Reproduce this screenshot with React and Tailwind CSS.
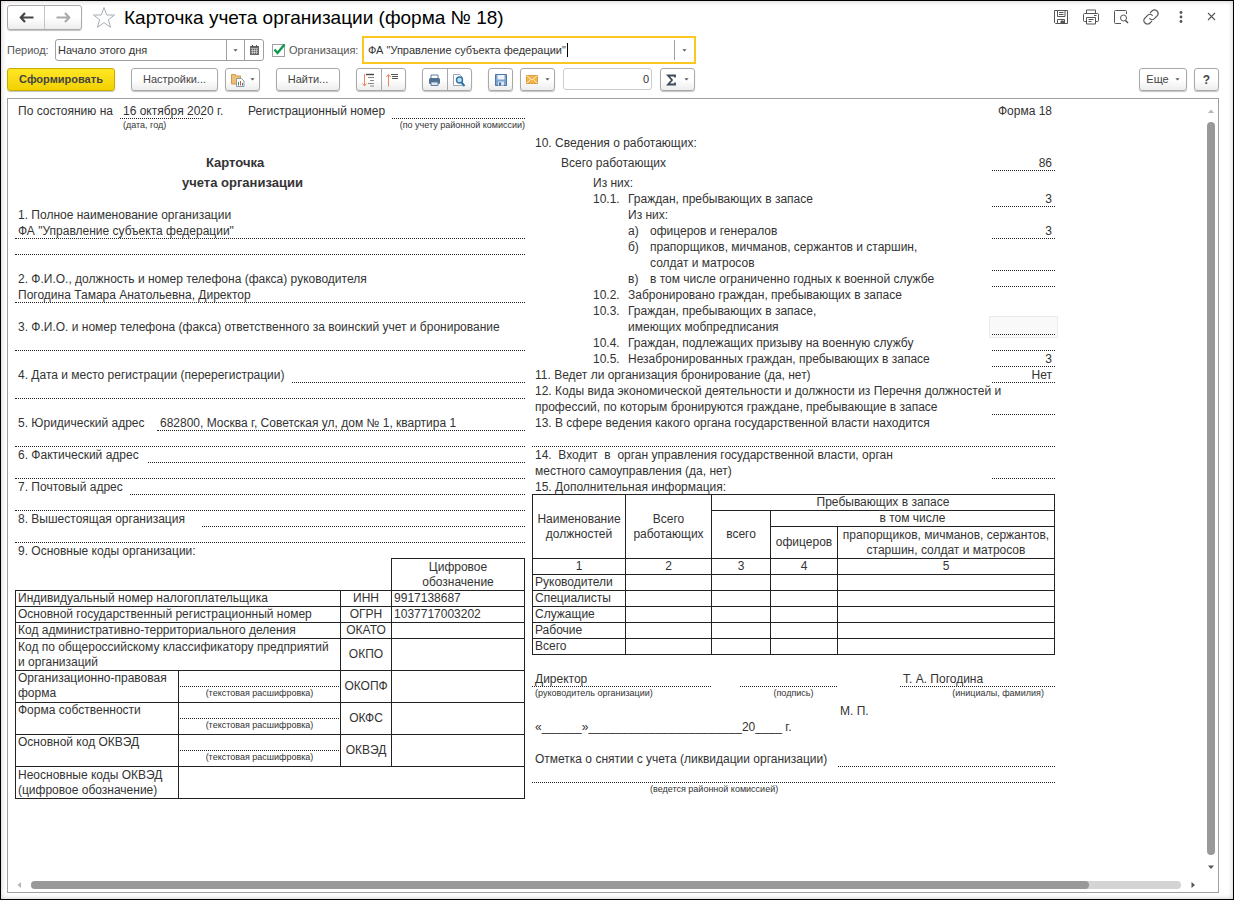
import React, { useState } from 'react';

const toolButton =
  'flex h-[23px] items-center justify-center rounded-[3px] border border-[#a9a9a9] bg-linear-to-b from-white from-50% to-[#ededed] shadow-[0_1px_1px_#c4c4c4]';

function Caret({ className = '' }) {
  return (
    <svg className={className} width="5" height="3" viewBox="0 0 5 3" aria-hidden="true">
      <path d="M.4.2h4.200L2.500 2.600z" fill="#555" />
    </svg>
  );
}

function BackIcon({ color }) {
  return (
    <svg width="15" height="11" viewBox="0 0 15 11" fill="none" stroke={color} strokeWidth="2.2">
      <path d="M1.5 5.5H14.5M6 1L1.8 5.5L6 10" />
    </svg>
  );
}

function StarIcon() {
  return (
    <svg width="24" height="23" viewBox="0 0 24 23" fill="#fff" stroke="#a8aeb4" strokeWidth="1">
      <path d="M12 1.5L14.7 9H22.5L16.3 13.7L18.6 21.3L12 16.7L5.4 21.3L7.7 13.7L1.5 9H9.3Z" />
    </svg>
  );
}

function CalendarIcon() {
  return (
    <svg width="9" height="10" viewBox="0 0 9 10">
      <path d="M0 1h9v9H0z" fill="#666" />
      <path d="M2 0h1v2H2zM6 0h1v2H6z" fill="#555" />
      <path d="M1 3.5h7M1 5.5h7M1 7.5h7M2.5 4v5M4.5 4v5M6.5 4v5" stroke="#ddd" strokeWidth=".6" />
    </svg>
  );
}

function SaveIcon() {
  return (
    <svg width="16" height="16" viewBox="0 0 16 16" fill="none" stroke="#555" strokeWidth="1">
      <path d="M1.5 1.5h13v13h-12l-1-1z" />
      <path d="M4.500 1.5v6h7.500v-6M6 3.500h4.500M6 5.500h4.500M4.500 14.5v-4h7v4" />
      <path d="M8 12h2.500v2H8z" fill="#555" />
    </svg>
  );
}

function PrinterIcon() {
  return (
    <svg width="16" height="16" viewBox="0 0 16 16" fill="none" stroke="#555" strokeWidth="1">
      <path d="M3.500 4.500v-3.500h9v3.500M3.500 12.500h-2a1 1 0 0 1-1-1v-6a1 1 0 0 1 1-1h13a1 1 0 0 1 1 1v6a1 1 0 0 1-1 1h-2" />
      <path d="M3.500 8.500h9v6.500h-9zM5.500 10.500h5M5.500 12.500h3M11 6.500h2.500" />
    </svg>
  );
}

function PreviewIcon() {
  return (
    <svg width="16" height="16" viewBox="0 0 16 16" fill="none" stroke="#555" strokeWidth="1">
      <path d="M8 14.500H2.500a1 1 0 0 1-1-1v-11a1 1 0 0 1 1-1h10a1 1 0 0 1 1 1V5" />
      <circle cx="10.500" cy="9" r="3" />
      <path d="M12.500 11.500L15 14" strokeWidth="1.600" />
    </svg>
  );
}

function LinkIcon() {
  return (
    <svg width="16" height="16" viewBox="0 0 24 24" fill="none" stroke="#555" strokeWidth="1.600" strokeLinecap="round">
      <path d="M10 14.500a5 5 0 0 0 7 0l4-4a5 5 0 0 0-7.500-7.500l-2.500 2.500" />
      <path d="M14 9.500a5 5 0 0 0-7 0l-4 4a5 5 0 0 0 7.500 7.500l2.500-2.500" />
    </svg>
  );
}

function DotsIcon() {
  return (
    <svg width="4" height="12" viewBox="0 0 4 12" fill="#555">
      <circle cx="2" cy="1.500" r="1.400" />
      <circle cx="2" cy="6" r="1.400" />
      <circle cx="2" cy="10.500" r="1.400" />
    </svg>
  );
}

function CloseIcon() {
  return (
    <svg width="9" height="9" viewBox="0 0 9 9" stroke="#555" strokeWidth="1.100">
      <path d="M1 1l7 7M8 1L1 8" />
    </svg>
  );
}

function VariantIcon() {
  return (
    <svg width="14" height="14" viewBox="0 0 14 14">
      <path d="M.5 1.500h4l1 1.500h4v8h-9z" fill="#edc078" stroke="#d09c48" />
      <path d="M5.500 5.500h5l2.500 2.500v5.500H5.500z" fill="#fff" stroke="#8b9aa8" />
      <path d="M7.500 9v3.500" stroke="#3c8f5a" />
      <path d="M9.500 8v4.500" stroke="#d8573c" />
      <path d="M11.500 10v2.500" stroke="#3c74b0" />
    </svg>
  );
}

function ExpandIcon() {
  return (
    <svg width="14" height="14" viewBox="0 0 14 14" fill="none">
      <path d="M2.500 1v12M.5 10.500l2 2.500l2-2.500" stroke="#ee8458" />
      <path d="M4 1.500h8" stroke="#444" strokeWidth="1.400" />
      <path d="M6 4.500h6M8 7.500h4M6 10.500h6M8 13h4" stroke="#888" strokeWidth="1.200" />
    </svg>
  );
}

function CollapseIcon() {
  return (
    <svg width="14" height="14" viewBox="0 0 14 14" fill="none">
      <path d="M2.500 13.500V1.500M.5 4l2-2.500l2 2.500" stroke="#ee8458" />
      <path d="M5 1.500h7M6 3.500h6M6 5.500h6" stroke="#555" strokeWidth="1.200" />
    </svg>
  );
}

function PrintBlueIcon() {
  return (
    <svg width="13" height="12" viewBox="0 0 13 12">
      <path d="M3 1h7v4H3z" fill="#fff" stroke="#5f7f9e" />
      <rect x="1" y="4" width="11" height="6" rx="1.500" fill="#4d6f90" />
      <path d="M3 8h7v3.500H3z" fill="#dfe9f2" stroke="#5f7f9e" />
    </svg>
  );
}

function PreviewBlueIcon() {
  return (
    <svg width="14" height="14" viewBox="0 0 14 14" fill="none">
      <path d="M1.500 1.500h6l3 3v8h-9z" fill="#fff" stroke="#9aa5b0" />
      <circle cx="7.500" cy="7" r="3" fill="#bfe0f2" stroke="#2f75a5" strokeWidth="1.400" />
      <path d="M9.500 9.500l3 3.500" stroke="#2f75a5" strokeWidth="2" />
    </svg>
  );
}

function SaveBlueIcon() {
  return (
    <svg width="12" height="12" viewBox="0 0 12 12">
      <path d="M.5.5h11v11h-11z" fill="#7ba4cf" stroke="#4c78a6" />
      <path d="M2.500 1h7v4.500h-7z" fill="#eef4fa" />
      <path d="M3 7.500h6v4H3z" fill="#dde6ee" />
      <path d="M4 8.500h2v3H4z" fill="#3e6c9c" />
    </svg>
  );
}

function MailIcon() {
  return (
    <svg width="12" height="9" viewBox="0 0 12 9">
      <path d="M.5.5h11v8H.5z" fill="#f1b44c" stroke="#dfa043" />
      <path d="M1 1l5 4l5-4M1 8l3.500-3.500M11 8L7.500 4.500" fill="none" stroke="#fff0cc" strokeWidth=".9" />
    </svg>
  );
}

function ScrollArrow({ d, color = '#555' }) {
  return (
    <svg width="6" height="6" viewBox="0 0 6 6" aria-hidden="true">
      <path d={d} fill={color} />
    </svg>
  );
}

function TitleBar() {
  return (
    <header className="flex h-[33px] items-center pl-[6px] pr-[14px]">
      <div className="flex h-[25px] rounded-[3px] border border-[#a9a9a9] bg-linear-to-b from-white from-50% to-[#ededed] shadow-[0_1px_1px_#c4c4c4]">
        <button aria-label="Назад" className="flex w-[37px] items-center justify-center border-r border-[#c4c4c4]">
          <BackIcon color="#444" />
        </button>
        <button aria-label="Вперед" className="flex w-[36px] items-center justify-center">
          <span className="-scale-x-100"><BackIcon color="#aaa" /></span>
        </button>
      </div>
      <button aria-label="В избранное" className="ml-[10px]"><StarIcon /></button>
      <h1 className="ml-[8px] whitespace-nowrap text-[19px] leading-[24px] text-black">
        Карточка учета организации (форма № 18)
      </h1>
      <div className="ml-auto flex items-center gap-[14px] pb-[2px]">
        <button aria-label="Сохранить"><SaveIcon /></button>
        <button aria-label="Печать"><PrinterIcon /></button>
        <button aria-label="Просмотр"><PreviewIcon /></button>
        <button aria-label="Ссылка"><LinkIcon /></button>
        <button aria-label="Меню" className="flex w-4 justify-center"><DotsIcon /></button>
        <button aria-label="Закрыть" className="flex w-4 justify-center"><CloseIcon /></button>
      </div>
    </header>
  );
}

function Filters() {
  const [period, setPeriod] = useState('Начало этого дня');
  const [org, setOrg] = useState('ФА "Управление субъекта федерации"');
  const [byOrg, setByOrg] = useState(true);

  return (
    <div className="flex h-[32px] items-center pl-[6px]">
      <label htmlFor="period" className="w-[48px] text-[#555]">Период:</label>
      <div className="flex h-[22px] w-[209px] rounded-[3px] border border-[#a0a0a0] bg-white">
        <input
          id="period"
          value={period}
          onChange={(e) => setPeriod(e.target.value)}
          className="min-w-0 flex-1 pl-[2px] text-[#333] outline-none"
        />
        <button aria-label="Выбрать период" className="flex w-[18px] items-center justify-center border-l border-[#a0a0a0]">
          <Caret />
        </button>
        <button aria-label="Календарь" className="flex w-[19px] items-center justify-center border-l border-[#a0a0a0]">
          <CalendarIcon />
        </button>
      </div>
      <div className="relative ml-[8px] h-[13px] w-[13px]">
        <input
          id="byOrg"
          type="checkbox"
          checked={byOrg}
          onChange={(e) => setByOrg(e.target.checked)}
          className="block h-[13px] w-[13px] appearance-none border border-[#a0a0a0] bg-white"
        />
        {byOrg && (
          <svg className="pointer-events-none absolute -top-px left-px" width="13" height="13" viewBox="0 0 13 13" fill="none">
            <path d="M1.500 6.500L4.500 10L11.500 1.500" stroke="#0a9a4a" strokeWidth="2.400" />
          </svg>
        )}
      </div>
      <label htmlFor="byOrg" className="ml-[4px] w-[73px] text-[#555]">Организация:</label>
      <div className="relative flex h-[28px] w-[334px] border-2 border-[#fcc71f] bg-white">
        <input
          aria-label="Организация"
          value={org}
          onChange={(e) => setOrg(e.target.value)}
          className="min-w-0 flex-1 pl-[4px] text-[#333] outline-none"
        />
        <span className="pointer-events-none absolute left-[203px] top-[5px] h-[14px] w-px bg-black" />
        <button aria-label="Выбрать организацию" className="my-[2px] flex w-[20px] items-center justify-center border-l border-[#a0a0a0]">
          <Caret />
        </button>
      </div>
    </div>
  );
}

function Toolbar() {
  return (
    <div className="flex h-[32px] items-start pl-[6px] pr-[14px] pt-[2px] text-[#444]">
      <button className="h-[23px] w-[108px] rounded-[3px] border border-[#c9ab00] bg-linear-to-b from-[#ffe722] to-[#f2d100] font-bold shadow-[0_1px_1px_#c4c4c4]">
        Сформировать
      </button>
      <button className={`${toolButton} ml-[16px] w-[87px]`}>Настройки...</button>
      <button aria-label="Варианты" className={`${toolButton} ml-[7px] w-[35px] gap-[5px]`}>
        <VariantIcon />
        <Caret />
      </button>
      <button className={`${toolButton} ml-[16px] w-[64px]`}>Найти...</button>
      <div className={`${toolButton} ml-[16px] w-[50px]`}>
        <button aria-label="Развернуть группы" className="flex h-full flex-1 items-center justify-center border-r border-[#a9a9a9]">
          <ExpandIcon />
        </button>
        <button aria-label="Свернуть группы" className="flex h-full flex-1 items-center justify-center">
          <CollapseIcon />
        </button>
      </div>
      <div className={`${toolButton} ml-[16px] w-[50px]`}>
        <button aria-label="Печать" className="flex h-full flex-1 items-center justify-center border-r border-[#a9a9a9]">
          <PrintBlueIcon />
        </button>
        <button aria-label="Просмотр" className="flex h-full flex-1 items-center justify-center">
          <PreviewBlueIcon />
        </button>
      </div>
      <button aria-label="Сохранить" className={`${toolButton} ml-[16px] w-[25px]`}><SaveBlueIcon /></button>
      <button aria-label="Отправить" className={`${toolButton} ml-[7px] w-[35px] gap-[7px]`}>
        <MailIcon />
        <Caret />
      </button>
      <input
        aria-label="Сумма"
        readOnly
        value="0"
        className="ml-[8px] h-[22px] w-[89px] rounded-[3px] border border-[#ccc] bg-white pr-[2px] text-right text-[#333]"
      />
      <button aria-label="Сумма ячеек" className={`${toolButton} ml-[8px] w-[35px] gap-[7px]`}>
        <svg width="11" height="12" viewBox="0 0 11 12" fill="none" stroke="#3c4a58" strokeWidth="1.800">
          <path d="M9 3.500V1.500H2L6 6L2 10.500H9V8.500" />
        </svg>
        <Caret />
      </button>
      <button className={`${toolButton} ml-auto w-[48px] gap-[6px]`}>
        Еще
        <Caret />
      </button>
      <button aria-label="Справка" className={`${toolButton} ml-[7px] w-[25px] text-[12px] font-bold`}>?</button>
    </div>
  );
}

// one 16px sheet row, the dotted rule fills what the label leaves free
function Field({ label, width = '', value = '' }) {
  return (
    <div className="flex h-4">
      {label && <span className={`${width} shrink-0 pl-[3px]`}>{label}</span>}
      <span className="flex-1 border-b border-dotted border-[#222] pl-[3px]">{value}</span>
    </div>
  );
}

function Line({ children, indent = 'pl-[3px]' }) {
  return <div className={`h-4 ${indent}`}>{children}</div>;
}

// row of the right column with a value cell at its end
function Stat({ indent = 'pl-[96px]', num, numWidth = 'w-[35px]', text, value = '', tall, line = true, active }) {
  return (
    <div className={`flex items-end ${tall ? 'h-5' : 'h-4'}`}>
      <div className={`flex min-w-0 flex-1 ${indent}`}>
        {num !== undefined && <span className={`${numWidth} shrink-0`}>{num}</span>}
        <span>{text}</span>
      </div>
      {line && (
        <div
          className={`h-4 w-[63px] border-b border-dotted border-[#222] pr-[3px] text-right ${
            active ? 'bg-[#f9f9f9] shadow-[0_0_0_2px_#f9f9f9,0_0_0_3px_#ebebeb]' : ''
          }`}
        >
          {value}
        </div>
      )}
    </div>
  );
}

const cell = 'border border-[#222] p-0';

function TextCode({ name, code }) {
  return (
    <tr className="h-8">
      <td className={`${cell} pl-[2px] align-top`}>{name}</td>
      <td className={`${cell} align-top`}>
        <div className="mx-px h-4 border-b border-dotted border-[#222]" />
        <div className="text-center text-[9px] leading-[13px]">(текстовая расшифровка)</div>
      </td>
      <td className={`${cell} text-center`}>{code}</td>
      <td className={cell} />
    </tr>
  );
}

function CodesTable() {
  return (
    <table className="-mt-px w-full table-fixed border-collapse leading-[15px]">
      <colgroup>
        <col className="w-[163px]" />
        <col className="w-[162px]" />
        <col className="w-[51px]" />
        <col />
      </colgroup>
      <tbody>
        <tr className="h-8">
          <td colSpan={3} />
          <th className={`${cell} font-normal`}>Цифровое<br />обозначение</th>
        </tr>
        <tr className="h-4">
          <td colSpan={2} className={`${cell} pl-[2px]`}>Индивидуальный номер налогоплательщика</td>
          <td className={`${cell} text-center`}>ИНН</td>
          <td className={`${cell} pl-[2px]`}>9917138687</td>
        </tr>
        <tr className="h-4">
          <td colSpan={2} className={`${cell} pl-[2px]`}>Основной государственный регистрационный номер</td>
          <td className={`${cell} text-center`}>ОГРН</td>
          <td className={`${cell} pl-[2px]`}>1037717003202</td>
        </tr>
        <tr className="h-4">
          <td colSpan={2} className={`${cell} pl-[2px]`}>Код административно-территориального деления</td>
          <td className={`${cell} text-center`}>ОКАТО</td>
          <td className={cell} />
        </tr>
        <tr className="h-8">
          <td colSpan={2} className={`${cell} pl-[2px]`}>
            Код по общероссийскому классификатору предприятий<br />и организаций
          </td>
          <td className={`${cell} text-center`}>ОКПО</td>
          <td className={cell} />
        </tr>
        <TextCode name={<>Организационно-правовая<br />форма</>} code="ОКОПФ" />
        <TextCode name="Форма собственности" code="ОКФС" />
        <TextCode name="Основной код ОКВЭД" code="ОКВЭД" />
        <tr className="h-8">
          <td className={`${cell} pl-[2px]`}>Неосновные коды ОКВЭД<br />(цифровое обозначение)</td>
          <td colSpan={3} className={cell} />
        </tr>
      </tbody>
    </table>
  );
}

function StaffTable() {
  const rows = ['Руководители', 'Специалисты', 'Служащие', 'Рабочие', 'Всего'];
  return (
    <table className="-mt-px w-full table-fixed border-collapse leading-[15px]">
      <colgroup>
        <col className="w-[93px]" />
        <col className="w-[86px]" />
        <col className="w-[59px]" />
        <col className="w-[67px]" />
        <col />
      </colgroup>
      <thead className="text-center">
        <tr className="h-4">
          <th rowSpan={3} className={`${cell} font-normal`}>Наименование<br />должностей</th>
          <th rowSpan={3} className={`${cell} font-normal`}>Всего<br />работающих</th>
          <th colSpan={3} className={`${cell} font-normal`}>Пребывающих в запасе</th>
        </tr>
        <tr className="h-4">
          <th rowSpan={2} className={`${cell} font-normal`}>всего</th>
          <th colSpan={2} className={`${cell} font-normal`}>в том числе</th>
        </tr>
        <tr className="h-8">
          <th className={`${cell} font-normal`}>офицеров</th>
          <th className={`${cell} font-normal`}>
            прапорщиков, мичманов, сержантов,<br />старшин, солдат и матросов
          </th>
        </tr>
        <tr className="h-4">
          {[1, 2, 3, 4, 5].map((n) => (
            <th key={n} className={`${cell} font-normal`}>{n}</th>
          ))}
        </tr>
      </thead>
      <tbody>
        {rows.map((name) => (
          <tr key={name} className="h-4">
            <td className={`${cell} pl-[2px]`}>{name}</td>
            <td className={cell} />
            <td className={cell} />
            <td className={cell} />
            <td className={cell} />
          </tr>
        ))}
      </tbody>
    </table>
  );
}

function LeftColumn() {
  return (
    <div className="min-w-0">
      <div className="flex h-4">
        <span className="w-[105px] pl-[3px]">По состоянию на</span>
        <span className="w-[83px] border-b border-dotted border-[#222] pl-[3px]">16 октября 2020 г.</span>
        <span className="ml-[45px] w-[144px]">Регистрационный номер</span>
        <span className="flex-1 border-b border-dotted border-[#222]" />
      </div>
      <div className="flex h-4 text-[9px] leading-[13px]">
        <span className="pl-[108px]">(дата, год)</span>
        <span className="ml-auto">(по учету районной комиссии)</span>
      </div>
      <h2 className="pt-[18px] text-[13px] font-bold leading-[20px]">
        <span className="block pl-[191px]">Карточка</span>
        <span className="block pl-[167px]">учета организации</span>
      </h2>
      <div className="pt-[14px]">
        <Line>1. Полное наименование организации</Line>
        <Field value={'ФА "Управление субъекта федерации"'} />
        <Field />
      </div>
      <div className="pt-4">
        <Line>2. Ф.И.О., должность и номер телефона (факса) руководителя</Line>
        <Field value="Погодина Тамара Анатольевна, Директор" />
      </div>
      <div className="pt-4">
        <Line>3. Ф.И.О. и номер телефона (факса) ответственного за воинский учет и бронирование</Line>
        <Field />
      </div>
      <div className="pt-4">
        <Field label="4. Дата и место регистрации (перерегистрации)" width="w-[277px]" />
        <Field />
      </div>
      <div className="pt-4">
        <Field label="5. Юридический адрес" width="w-[142px]" value="682800, Москва г, Советская ул, дом № 1, квартира 1" />
        <Field />
      </div>
      <Field label="6. Фактический адрес" width="w-[133px]" />
      <Field />
      <Field label="7. Почтовый адрес" width="w-[115px]" />
      <Field />
      <Field label="8. Вышестоящая организация" width="w-[187px]" />
      <Field />
      <Line>9. Основные коды организации:</Line>
      <CodesTable />
    </div>
  );
}

function RightColumn() {
  return (
    <div className="min-w-0">
      <div className="h-8 pr-[3px] text-right">Форма 18</div>
      <Line>10. Сведения о работающих:</Line>
      <Stat tall indent="pl-[29px]" text="Всего работающих" value="86" />
      <Stat tall indent="pl-[61px]" text="Из них:" line={false} />
      <Stat indent="pl-[61px]" num="10.1." text="Граждан, пребывающих в запасе" value="3" />
      <Stat text="Из них:" line={false} />
      <Stat num="а)" numWidth="w-[22px]" text="офицеров и генералов" value="3" />
      <Stat num="б)" numWidth="w-[22px]" text="прапорщиков, мичманов, сержантов и старшин," line={false} />
      <Stat num="" numWidth="w-[22px]" text="солдат и матросов" />
      <Stat num="в)" numWidth="w-[22px]" text="в том числе ограниченно годных к военной службе" />
      <Stat indent="pl-[61px]" num="10.2." text="Забронировано граждан, пребывающих в запасе" line={false} />
      <Stat indent="pl-[61px]" num="10.3." text="Граждан, пребывающих в запасе," line={false} />
      <Stat text="имеющих мобпредписания" active />
      <Stat indent="pl-[61px]" num="10.4." text="Граждан, подлежащих призыву на военную службу" />
      <Stat indent="pl-[61px]" num="10.5." text="Незабронированных граждан, пребывающих в запасе" value="3" />
      <Stat indent="pl-[3px]" text="11. Ведет ли организация бронирование (да, нет)" value="Нет" />
      <Line>12. Коды вида экономической деятельности и должности из Перечня должностей и</Line>
      <Stat indent="pl-[3px]" text="профессий, по которым бронируются граждане, пребывающие в запасе" />
      <Line>13. В сфере ведения какого органа государственной власти находится</Line>
      <Field />
      <Line indent="whitespace-pre pl-[3px]">{'14.  Входит  в  орган управления государственной власти, орган'}</Line>
      <Stat indent="pl-[3px]" text="местного самоуправления (да, нет)" />
      <Line>15. Дополнительная информация:</Line>
      <StaffTable />
      <div className="flex pt-4">
        <div className="w-[179px]">
          <div className="h-4 border-b border-dotted border-[#222] pl-[3px]">Директор</div>
          <div className="pl-[3px] text-[9px] leading-[13px]">(руководитель организации)</div>
        </div>
        <div className="ml-[29px] w-[97px]">
          <div className="h-4 border-b border-dotted border-[#222]" />
          <div className="pl-[10px] text-center text-[9px] leading-[13px]">(подпись)</div>
        </div>
        <div className="ml-auto w-[155px]">
          <div className="h-4 border-b border-dotted border-[#222] pl-[3px]">Т. А. Погодина</div>
          <div className="pr-[11px] text-right text-[9px] leading-[13px]">(инициалы, фамилия)</div>
        </div>
      </div>
      <div className="pt-[3px]">
        <Line indent="pl-[308px]">М. П.</Line>
        <Line>«______»_______________________20____ г.</Line>
      </div>
      <div className="pt-4">
        <Field label="Отметка о снятии с учета (ликвидации организации)" width="w-[306px]" />
        <Field />
        <div className="pl-[118px] text-[9px] leading-[13px]">(ведется районной комиссией)</div>
      </div>
    </div>
  );
}

function Sheet() {
  return (
    <main className="ml-[6px] mr-[14px] mb-[6px] flex flex-1 flex-col border border-[#a0a0a0] bg-white">
      <div className="flex flex-1">
        <div className="min-w-0 flex-1 overflow-hidden pl-[7px] pt-[4px]">
          <div className="grid w-full max-w-[1040px] grid-cols-[510fr_523fr] gap-[7px] whitespace-nowrap text-[12px] leading-4 text-[#333]">
            <LeftColumn />
            <RightColumn />
          </div>
        </div>
        <div className="flex w-[14px] flex-col items-center pt-[9px]">
          <ScrollArrow d="M0 5L3 1.500L6 5z" color="#b5b5b5" />
          <div className="mt-[8px] w-2 flex-1 rounded-full bg-[#999]" />
          <div className="pb-[8px] pt-[9px]"><ScrollArrow d="M0 1.500h6L3 5z" /></div>
        </div>
      </div>
      <div className="flex h-[14px] items-center pl-[8px] pr-[22px]">
        <ScrollArrow d="M5 0L1.500 3L5 6z" color="#b5b5b5" />
        <div className="ml-[9px] mr-[9px] h-2 flex-1 rounded-full bg-[#d4d4d4]">
          <div className="h-2 w-[92%] rounded-full bg-[#999]" />
        </div>
        <ScrollArrow d="M1.500 0L5 3L1.500 6z" />
      </div>
    </main>
  );
}

export default function App() {
  return (
    <div className="flex min-h-screen flex-col border border-black bg-white font-['Liberation_Sans',Arial,sans-serif] text-[11px] shadow-[inset_0_0_5px_#c9c0c4]">
      <TitleBar />
      <Filters />
      <Toolbar />
      <Sheet />
    </div>
  );
}
